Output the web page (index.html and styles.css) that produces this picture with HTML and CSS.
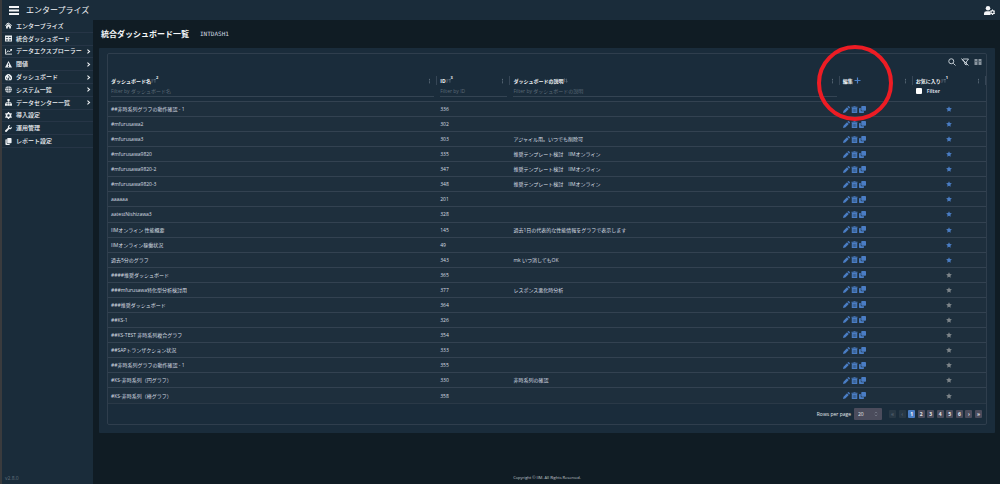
FILE: index.html
```html
<!DOCTYPE html>
<html lang="ja">
<head>
<meta charset="utf-8">
<meta name="viewport" content="width=device-width, initial-scale=1">
<title>統合ダッシュボード一覧</title>
<link rel="stylesheet" href="styles.css">
</head>
<body>
<svg class="sprite" aria-hidden="true">
  <symbol id="pencil" viewBox="0 0 14 14"><path d="M0 14l1-4.500 7-7 3.500 3.500-7 7zM9 1.500l1-1q1-.8 2 0l1.500 1.500q.8 1 0 2l-1 1z"/></symbol>
  <symbol id="trash" viewBox="0 0 14 14"><path d="M1 1.500h3.500L5.500.3h3l1 1.200H13v2H1z"/><path d="M1.500 4h11v9q0 1-1 1h-9q-1 0-1-1z"/><path d="M4.500 6v6M7 6v6M9.500 6v6" stroke="#1e2f3d" stroke-width=".7"/></symbol>
  <symbol id="copy" viewBox="0 0 14 14"><rect x="4.500" width="9.500" height="9.500" rx="1.500"/><path d="M3.500 4H1.500Q0 4 0 5.500v7Q0 14 1.500 14h7q1.500 0 1.500-1.500v-2H5q-1.500 0-1.500-1.500z"/></symbol>
  <symbol id="star" viewBox="0 0 14 14"><path d="M7 .5l2 4.300 4.700.6-3.400 3.200.8 4.700L7 11l-4.100 2.300.8-4.700L.3 5.400 5 4.800z"/></symbol>
  <symbol id="chevron" viewBox="0 0 14 14"><path d="M4 1.500L10 7l-6 5.500" fill="none" stroke="currentColor" stroke-width="3"/></symbol>
  <symbol id="dots" viewBox="0 0 14 14"><circle cx="7" cy="2" r="1.500"/><circle cx="7" cy="7" r="1.500"/><circle cx="7" cy="12" r="1.500"/></symbol>
  <symbol id="sorted" viewBox="0 0 14 14"><path d="M1 5h7M1 8.500h5M1 12h3M11 13V3M8.500 5.500L11 3l2.500 2.500" fill="none" stroke="currentColor" stroke-width="1.500"/></symbol>
  <symbol id="unsorted" viewBox="0 0 14 14"><path d="M4 12V2M1.500 4.500L4 2l2.500 2.500M10 2v10M7.500 9.500L10 12l2.500-2.500" fill="none" stroke="currentColor" stroke-width="1.500"/></symbol>
</svg>

<header class="topbar">
  <button class="icon-button menu-button" aria-label="メニュー"><svg viewBox="0 0 20 18"><path d="M0 0h20v4H0zM0 7h20v4H0zM0 14h20v4H0z"/></svg></button>
  <span class="brand">エンタープライズ</span>
  <button class="icon-button user-button" aria-label="ユーザー設定"><svg viewBox="0 0 22 18"><circle cx="8" cy="4.500" r="4.500"/><path d="M0 18v-3q0-4.500 5-4.500h6q1 0 1.500.5-1.500 4 1 7z"/><circle cx="17" cy="12.500" r="3.200" fill="none" stroke="currentColor" stroke-width="2.400"/><path d="M16 7h2v2h-2zM16 16h2v2h-2zM11.500 10.500l1-1.700 1.700 1-1 1.700zM19.800 15.200l1-1.700 1.700 1-1 1.700zM11.500 14.500l1.700-1 1 1.700-1.700 1zM19.800 9.800l1.700-1 1 1.700-1.700 1z"/></svg></button>
</header>

<div class="shell">
  <aside class="sidebar">
    <nav class="menu">
      <a href="#"><svg viewBox="0 0 16 16"><path d="M8 1l8 7-1 1.200L8 3.300 1 9.200 0 8l4-3.500V2h2v1zM8 4.600l5.500 4.700V15H9.500v-4h-3v4h-4V9.300z"/></svg><span>エンタープライズ</span></a>
      <a href="#"><svg viewBox="0 0 16 16"><path fill-rule="evenodd" d="M0 1h16v14H0zM2 5v2h5V5zM9 5v2h5V5zM2 9v1.500h5V9zM9 9v1.500h5V9zM2 12v1.200h5V12zM9 12v1.200h5V12z"/></svg><span>統合ダッシュボード</span></a>
      <a href="#"><svg viewBox="0 0 16 16"><path d="M1 2v12h15M3.500 10.500L7 6l3 3 4.500-5" fill="none" stroke="currentColor" stroke-width="2"/><path d="M11 2.500h5v5z"/></svg><span>データエクスプローラー</span><svg class="chevron"><use href="#chevron"/></svg></a>
      <a href="#"><svg viewBox="0 0 16 16"><path fill-rule="evenodd" d="M8 0l8 15H0zM7 5v5h2V5zM7 11.500v2h2v-2z"/></svg><span>閾値</span><svg class="chevron"><use href="#chevron"/></svg></a>
      <a href="#"><svg viewBox="0 0 16 16"><path fill-rule="evenodd" d="M2 14a8 8 0 1 1 12 0zM7 3v2h2V3zM2.500 8v2h2V8zM11.500 8v2h2V8zM10.500 4.500L7.300 9.500a2 2 0 1 0 1.800.7l2.500-5z"/></svg><span>ダッシュボード</span><svg class="chevron"><use href="#chevron"/></svg></a>
      <a href="#"><svg viewBox="0 0 16 16"><circle cx="8" cy="8" r="7.500"/><path class="cut" d="M8 0v16M0 5.500h16M0 10.500h16M5 1q-2 7 0 14M11 1q2 7 0 14"/></svg><span>システム一覧</span><svg class="chevron"><use href="#chevron"/></svg></a>
      <a href="#"><svg viewBox="0 0 16 16"><path d="M5.500 0h5v5h-5zM0 10.500h5v5H0zM5.500 10.500h5v5h-5zM11 10.500h5v5h-5z"/><path d="M8 4v7M2.500 11V8h11v3" fill="none" stroke="currentColor" stroke-width="1.500"/></svg><span>データセンター一覧</span><svg class="chevron"><use href="#chevron"/></svg></a>
      <a href="#"><svg viewBox="0 0 16 16"><circle cx="8" cy="8" r="4.500" fill="none" stroke="currentColor" stroke-width="3.500"/><path d="M6.500 0h3v3h-3zM6.500 13h3v3h-3zM0 5l1.500-2.500 3 1.700L3 6.500zM13 9.500l3 1.500-1.500 2.500-3-1.700zM0 11l3-1.500 1.500 2.300-3 1.700zM13 6.500l-1.500-2.300 3-1.700L16 5z"/></svg><span>導入設定</span></a>
      <a href="#"><svg viewBox="0 0 16 16"><path d="M15.700 4a4.500 4.500 0 0 1-6 5.200L3.800 15.200a2 2 0 0 1-3-3L6.800 6.300A4.500 4.500 0 0 1 12 .3L9.500 3l.5 3 3 .5z"/></svg><span>運用管理</span></a>
      <a href="#"><svg viewBox="0 0 16 16"><rect x="5" width="10" height="12" rx="1.500"/><path d="M4 3H2.500Q1 3 1 4.500v10Q1 16 2.500 16h7q1.500 0 1.500-1.500V13H5.500Q4 13 4 11.500z"/></svg><span>レポート設定</span></a>
    </nav>
    <div class="version">v2.8.0</div>
  </aside>

  <main class="content">
    <div class="heading"><h1>統合ダッシュボード一覧</h1><code>INTDASH1</code></div>
    <section class="panel">
      <div class="grid">
        <div class="toolbar">
          <button class="icon-button" aria-label="検索"><svg viewBox="0 0 16 16"><path d="M10.500 10.500L15 15M11.500 6.500a5 5 0 1 1-10 0 5 5 0 0 1 10 0z" fill="none" stroke="currentColor" stroke-width="1.800"/></svg></button>
          <button class="icon-button" aria-label="フィルター解除"><svg viewBox="0 0 16 16"><path d="M4 2h11l-4.500 6v6l-3-2V8M1 1l14 14M2 3l5.500 6" fill="none" stroke="currentColor" stroke-width="1.800"/></svg></button>
          <button class="icon-button" aria-label="列の表示"><svg viewBox="0 0 16 16"><path fill-rule="evenodd" class="soft" d="M1 2h6v12H1zM9 2h6v12H9zM2.500 7h3v1h-3zM10.500 7h3v1h-3z"/></svg></button>
        </div>
        <table class="table">
          <colgroup><col class="c-name"><col class="c-id"><col class="c-desc"><col class="c-edit"><col class="c-fav"></colgroup>
          <thead>
            <tr>
              <th><div class="head"><span>ダッシュボード名</span><svg class="sort"><use href="#sorted"/></svg><sup>2</sup><svg class="dots"><use href="#dots"/></svg></div><input class="filter" aria-label="ダッシュボード名" placeholder="Filter by ダッシュボード名"></th>
              <th><div class="head"><span>ID</span><svg class="sort"><use href="#sorted"/></svg><sup>3</sup><svg class="dots"><use href="#dots"/></svg></div><input class="filter" aria-label="ID" placeholder="Filter by ID"></th>
              <th><div class="head"><span>ダッシュボードの説明</span><svg class="sort"><use href="#unsorted"/></svg><svg class="dots"><use href="#dots"/></svg></div><input class="filter" aria-label="ダッシュボードの説明" placeholder="Filter by ダッシュボードの説明"></th>
              <th class="edit-head"><div class="head"><span>編集</span><button class="icon-button add" aria-label="追加"><svg viewBox="0 0 14 14"><path d="M5.800 1h2.400v4.800H13v2.400H8.200V13H5.800V8.200H1V5.800h4.800z"/></svg></button><svg class="dots"><use href="#dots"/></svg></div><div class="ring"></div></th>
              <th><div class="head"><span>お気に入り</span><svg class="sort"><use href="#sorted"/></svg><sup>1</sup><svg class="dots"><use href="#dots"/></svg></div><label class="check"><input type="checkbox"><span>Filter</span></label></th>
            </tr>
          </thead>
          <tbody>
            <tr><td>##非時系列グラフの動作確認 - 1</td><td>336</td><td></td><td><div class="actions"><button aria-label="編集"><svg><use href="#pencil"/></svg></button><button aria-label="削除"><svg><use href="#trash"/></svg></button><button aria-label="複製"><svg><use href="#copy"/></svg></button></div></td><td><button class="star on" aria-label="お気に入り"><svg><use href="#star"/></svg></button></td></tr>
            <tr><td>#mfurusawa2</td><td>302</td><td></td><td><div class="actions"><button aria-label="編集"><svg><use href="#pencil"/></svg></button><button aria-label="削除"><svg><use href="#trash"/></svg></button><button aria-label="複製"><svg><use href="#copy"/></svg></button></div></td><td><button class="star on" aria-label="お気に入り"><svg><use href="#star"/></svg></button></td></tr>
            <tr><td>#mfurusawa3</td><td>303</td><td>アジャイル用。いつでも削除可</td><td><div class="actions"><button aria-label="編集"><svg><use href="#pencil"/></svg></button><button aria-label="削除"><svg><use href="#trash"/></svg></button><button aria-label="複製"><svg><use href="#copy"/></svg></button></div></td><td><button class="star on" aria-label="お気に入り"><svg><use href="#star"/></svg></button></td></tr>
            <tr><td>#mfurusawa9820</td><td>335</td><td>推奨テンプレート検討　IIMオンライン</td><td><div class="actions"><button aria-label="編集"><svg><use href="#pencil"/></svg></button><button aria-label="削除"><svg><use href="#trash"/></svg></button><button aria-label="複製"><svg><use href="#copy"/></svg></button></div></td><td><button class="star on" aria-label="お気に入り"><svg><use href="#star"/></svg></button></td></tr>
            <tr><td>#mfurusawa9820-2</td><td>347</td><td>推奨テンプレート検討　IIMオンライン</td><td><div class="actions"><button aria-label="編集"><svg><use href="#pencil"/></svg></button><button aria-label="削除"><svg><use href="#trash"/></svg></button><button aria-label="複製"><svg><use href="#copy"/></svg></button></div></td><td><button class="star on" aria-label="お気に入り"><svg><use href="#star"/></svg></button></td></tr>
            <tr><td>#mfurusawa9820-3</td><td>348</td><td>推奨テンプレート検討　IIMオンライン</td><td><div class="actions"><button aria-label="編集"><svg><use href="#pencil"/></svg></button><button aria-label="削除"><svg><use href="#trash"/></svg></button><button aria-label="複製"><svg><use href="#copy"/></svg></button></div></td><td><button class="star on" aria-label="お気に入り"><svg><use href="#star"/></svg></button></td></tr>
            <tr><td>aaaaaa</td><td>201</td><td></td><td><div class="actions"><button aria-label="編集"><svg><use href="#pencil"/></svg></button><button aria-label="削除"><svg><use href="#trash"/></svg></button><button aria-label="複製"><svg><use href="#copy"/></svg></button></div></td><td><button class="star on" aria-label="お気に入り"><svg><use href="#star"/></svg></button></td></tr>
            <tr><td>aatestNishizawa3</td><td>328</td><td></td><td><div class="actions"><button aria-label="編集"><svg><use href="#pencil"/></svg></button><button aria-label="削除"><svg><use href="#trash"/></svg></button><button aria-label="複製"><svg><use href="#copy"/></svg></button></div></td><td><button class="star on" aria-label="お気に入り"><svg><use href="#star"/></svg></button></td></tr>
            <tr><td>IIMオンライン 性能概要</td><td>145</td><td>過去1日の代表的な性能情報をグラフで表示します</td><td><div class="actions"><button aria-label="編集"><svg><use href="#pencil"/></svg></button><button aria-label="削除"><svg><use href="#trash"/></svg></button><button aria-label="複製"><svg><use href="#copy"/></svg></button></div></td><td><button class="star on" aria-label="お気に入り"><svg><use href="#star"/></svg></button></td></tr>
            <tr><td>IIMオンライン稼働状況</td><td>49</td><td></td><td><div class="actions"><button aria-label="編集"><svg><use href="#pencil"/></svg></button><button aria-label="削除"><svg><use href="#trash"/></svg></button><button aria-label="複製"><svg><use href="#copy"/></svg></button></div></td><td><button class="star on" aria-label="お気に入り"><svg><use href="#star"/></svg></button></td></tr>
            <tr><td>過去5分のグラフ</td><td>343</td><td>mk いつ消してもOK</td><td><div class="actions"><button aria-label="編集"><svg><use href="#pencil"/></svg></button><button aria-label="削除"><svg><use href="#trash"/></svg></button><button aria-label="複製"><svg><use href="#copy"/></svg></button></div></td><td><button class="star on" aria-label="お気に入り"><svg><use href="#star"/></svg></button></td></tr>
            <tr><td>####推奨ダッシュボード</td><td>365</td><td></td><td><div class="actions"><button aria-label="編集"><svg><use href="#pencil"/></svg></button><button aria-label="削除"><svg><use href="#trash"/></svg></button><button aria-label="複製"><svg><use href="#copy"/></svg></button></div></td><td><button class="star" aria-label="お気に入り"><svg><use href="#star"/></svg></button></td></tr>
            <tr><td>###mfurusawa特化型分析検討用</td><td>377</td><td>レスポンス悪化時分析</td><td><div class="actions"><button aria-label="編集"><svg><use href="#pencil"/></svg></button><button aria-label="削除"><svg><use href="#trash"/></svg></button><button aria-label="複製"><svg><use href="#copy"/></svg></button></div></td><td><button class="star" aria-label="お気に入り"><svg><use href="#star"/></svg></button></td></tr>
            <tr><td>###推奨ダッシュボード</td><td>364</td><td></td><td><div class="actions"><button aria-label="編集"><svg><use href="#pencil"/></svg></button><button aria-label="削除"><svg><use href="#trash"/></svg></button><button aria-label="複製"><svg><use href="#copy"/></svg></button></div></td><td><button class="star" aria-label="お気に入り"><svg><use href="#star"/></svg></button></td></tr>
            <tr><td>##KS-1</td><td>326</td><td></td><td><div class="actions"><button aria-label="編集"><svg><use href="#pencil"/></svg></button><button aria-label="削除"><svg><use href="#trash"/></svg></button><button aria-label="複製"><svg><use href="#copy"/></svg></button></div></td><td><button class="star" aria-label="お気に入り"><svg><use href="#star"/></svg></button></td></tr>
            <tr><td>##KS-TEST 非時系列複合グラフ</td><td>354</td><td></td><td><div class="actions"><button aria-label="編集"><svg><use href="#pencil"/></svg></button><button aria-label="削除"><svg><use href="#trash"/></svg></button><button aria-label="複製"><svg><use href="#copy"/></svg></button></div></td><td><button class="star" aria-label="お気に入り"><svg><use href="#star"/></svg></button></td></tr>
            <tr><td>##SAPトランザクション状況</td><td>333</td><td></td><td><div class="actions"><button aria-label="編集"><svg><use href="#pencil"/></svg></button><button aria-label="削除"><svg><use href="#trash"/></svg></button><button aria-label="複製"><svg><use href="#copy"/></svg></button></div></td><td><button class="star" aria-label="お気に入り"><svg><use href="#star"/></svg></button></td></tr>
            <tr><td>##非時系列グラフの動作確認 - 1</td><td>355</td><td></td><td><div class="actions"><button aria-label="編集"><svg><use href="#pencil"/></svg></button><button aria-label="削除"><svg><use href="#trash"/></svg></button><button aria-label="複製"><svg><use href="#copy"/></svg></button></div></td><td><button class="star" aria-label="お気に入り"><svg><use href="#star"/></svg></button></td></tr>
            <tr><td>#KS-非時系列（円グラフ）</td><td>330</td><td>非時系列の確認</td><td><div class="actions"><button aria-label="編集"><svg><use href="#pencil"/></svg></button><button aria-label="削除"><svg><use href="#trash"/></svg></button><button aria-label="複製"><svg><use href="#copy"/></svg></button></div></td><td><button class="star" aria-label="お気に入り"><svg><use href="#star"/></svg></button></td></tr>
            <tr><td>#KS-非時系列（棒グラフ）</td><td>358</td><td></td><td><div class="actions"><button aria-label="編集"><svg><use href="#pencil"/></svg></button><button aria-label="削除"><svg><use href="#trash"/></svg></button><button aria-label="複製"><svg><use href="#copy"/></svg></button></div></td><td><button class="star" aria-label="お気に入り"><svg><use href="#star"/></svg></button></td></tr>
          </tbody>
        </table>
        <div class="footer">
          <label for="rows">Rows per page</label>
          <div class="select"><select id="rows"><option>20</option><option>50</option><option>100</option></select><svg viewBox="0 0 8 12" aria-hidden="true"><path d="M1.500 4.500L4 2l2.500 2.500M1.500 7.500L4 10l2.500-2.500" fill="none" stroke="currentColor"/></svg></div>
          <div class="pages"><button disabled>«</button><button disabled>‹</button><button class="current">1</button><button>2</button><button>3</button><button>4</button><button>5</button><button>6</button><button>›</button><button>»</button></div>
        </div>
      </div>
    </section>
    <footer class="copyright">Copyright © IIM. All Rights Reserved.</footer>
  </main>
</div>
</body>
</html>
```

FILE: styles.css
```css
* { box-sizing: border-box; }
body {
  margin: 0;
  min-height: 100vh;
  display: flex;
  flex-direction: column;
  background: #101c24;
  border-left: 2px solid #3a3b3d;
  color: #d3dae1;
  font: 5px/8px "Open Sans", "Noto Sans CJK JP", sans-serif;
}
button, input, select { font: inherit; color: inherit; margin: 0; padding: 0; border: 0; background: none; }
button { cursor: pointer; }
svg { display: block; fill: currentColor; }
.sprite { position: absolute; width: 0; height: 0; }
.icon-button { display: block; }

.topbar {
  display: flex;
  align-items: center;
  height: 20px;
  padding: 0 5px 0 7px;
  background: #1a2c3a;
  color: #f4f6f8;
}
.menu-button svg { width: 10px; height: 9px; }
.brand { margin-left: 7px; font-size: 8px; line-height: 12px; }
.user-button { margin-left: auto; }
.user-button svg { width: 11px; height: 9px; }

.shell { flex: 1; display: flex; }
.sidebar {
  width: 91px;
  flex: none;
  display: flex;
  flex-direction: column;
  background: #1a2c3a;
}
.menu { display: flex; flex-direction: column; height: 128px; }
.menu a {
  flex: 1;
  display: flex;
  align-items: center;
  gap: 4px;
  padding: 0 2px 0 3px;
  border-bottom: 1px solid #263546;
  color: #eef1f4;
  font-size: 6px;
  font-weight: 500;
  white-space: nowrap;
  text-decoration: none;
}
.menu svg { flex: none; width: 7px; height: 7px; }
.menu .chevron { width: 5px; height: 5px; margin-left: auto; }
.cut { fill: none; stroke: #1a2c3a; }
.version { margin-top: auto; padding: 0 3px 2px; color: #61707c; }

.content { flex: 1; min-width: 0; display: flex; flex-direction: column; padding: 0 5px 2px 6px; }
.heading { display: flex; align-items: center; gap: 11px; height: 28px; padding-left: 2px; }
h1 { margin: 0; font-size: 8px; line-height: 12px; font-weight: 700; color: #f4f6f8; }
code { font: 6px/8px "DejaVu Sans Mono", monospace; }

.panel { padding: 5px 8px 8px; background: #1a2c3b; border-radius: 1px; }
.grid { border: 1px solid #2f3e4d; border-radius: 2px; }
.toolbar { display: flex; justify-content: flex-end; align-items: center; gap: 5px; height: 20px; padding: 0 4px 4px 0; }
.toolbar svg { width: 8px; height: 8px; }
.soft { opacity: .6; }

.table { width: 100%; height: 330px; table-layout: fixed; border-collapse: separate; border-spacing: 0; }
.c-name { width: 37.500%; }
.c-desc { width: 37.500%; }
.c-id, .c-edit, .c-fav { width: 8.333%; }
th { height: 27px; padding: 2px 3px 0 3px; text-align: left; vertical-align: top; font-weight: 700; }
.head { display: flex; align-items: center; height: 9px; color: #f0f3f5; border-right: 1px solid #364656; }
th .head { margin-right: -3px; }
.sort { width: 5px; height: 5px; color: #78899a; }
sup { align-self: flex-start; font-size: 4px; line-height: 4px; }
.dots { width: 5px; height: 6px; margin-left: auto; margin-right: 4px; color: #778693; }
.filter {
  display: block;
  width: 100%;
  height: 12px;
  border-bottom: 1px solid #344453;
  font-weight: 400;
  outline: none;
}
.filter::placeholder { color: #5b6a77; opacity: 1; }
.add { color: #4c82c9; margin-left: 1px; }
.add svg { width: 7px; height: 7px; }
.edit-head { position: relative; }
/* Highlight drawn over the edit column */
.ring {
  position: absolute;
  left: -23px;
  top: -29px;
  width: 76px;
  height: 76px;
  border: 4px solid #ed1c24;
  border-radius: 50%;
  pointer-events: none;
}
.check { display: flex; align-items: center; gap: 5px; height: 12px; }
.check input { appearance: none; width: 6px; height: 6px; border-radius: 1px; background: #fff; }
td { padding: 0 3px; background: #1e2f3d; border-top: 1px solid #334251; white-space: nowrap; color: #d8dee3; }
tbody tr:last-child td { border-bottom: 1px solid #2a3947; }
.actions { display: flex; gap: 1px; color: #4a7dc4; }
.actions button, .star { display: block; }
.actions svg { width: 7px; height: 7px; }
.star { margin: 0 auto; color: #7d8489; }
.star.on { color: #4a7dc4; }
.star svg { width: 6px; height: 6px; }

.footer { display: flex; align-items: center; justify-content: flex-end; height: 20px; padding-right: 4px; color: #e3e8ec; }
.select { display: flex; align-items: center; margin: 0 7px 0 3px; width: 28px; height: 12px; background: #4b4c5c; border-radius: 1px; }
.select select { flex: 1; width: 100%; height: 12px; padding-left: 4px; appearance: none; }
.select svg { width: 4px; height: 6px; margin-right: 4px; color: #8c93a0; pointer-events: none; }
.pages { display: flex; justify-content: space-between; width: 93px; }
.pages button { width: 7px; height: 8px; border-radius: 1px; background: #4b4c5c; font-weight: 700; text-align: center; }
.pages button:disabled { background: #283845; color: #566573; }
.pages .current { background: #4a7dc4; color: #fff; }
.copyright { margin-top: auto; font-size: 4px; text-align: center; color: #c4cbd1; }
```
